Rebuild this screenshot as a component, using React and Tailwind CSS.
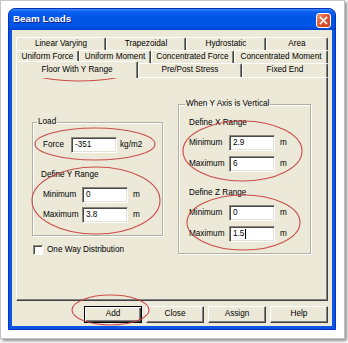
import React from "react";

const row1 = [
  ["Linear Varying", "w-[90px]"],
  ["Trapezoidal", "w-[80px]"],
  ["Hydrostatic", "w-[80px]"],
  ["Area", "w-[62px]"],
];
const row2 = [
  ["Uniform Force", "w-[63px]"],
  ["Uniform Moment", "w-[72px]"],
  ["Concentrated Force", "w-[83px]"],
  ["Concentrated Moment", "w-[94px]"],
];
const row3 = [
  ["Floor With Y Range", "w-[122px]", true],
  ["Pre/Post Stress", "w-[104px]"],
  ["Fixed End", "w-[86px]"],
];

function Tab({ label, w, sel }) {
  if (sel) {
    return (
      <div
        className={`${w} relative z-10 -mt-[2px] h-[17px] -mb-px flex items-center justify-center bg-[#ECE9D8] border-t border-l border-white border-r border-r-[#404040] rounded-t-[2px] shadow-[inset_-1px_0_0_#808080] pt-[1px]`}
      >
        {label}
      </div>
    );
  }
  return (
    <div
      className={`${w} h-full flex items-center justify-center bg-[#ECE9D8] border-t border-l border-white border-r border-r-[#404040] rounded-t-[2px] shadow-[inset_-1px_0_0_#808080]`}
    >
      {label}
    </div>
  );
}

function Input({ value, caret }) {
  return (
    <div className="w-[46px] h-[16px] bg-white border border-t-[#8a877c] border-l-[#8a877c] border-r-white border-b-white shadow-[inset_1px_1px_0_#4a4a46,inset_-1px_-1px_0_#e4e1d6] flex items-center pl-[3px] leading-none">
      <span>{value}</span>
      {caret && <span className="ml-px w-px h-[10px] bg-black" />}
    </div>
  );
}

function Row({ label, lw, value, unit, caret, um }) {
  return (
    <div className="flex items-center h-[16px] pl-[10px]">
      <div className={lw}>{label}</div>
      <Input value={value} caret={caret} />
      <div className={um}>{unit}</div>
    </div>
  );
}

function Button({ children, def }) {
  if (def) {
    return (
      <div className="w-[58px] h-[17px] flex items-center justify-center bg-[#ECE9D8] border border-black shadow-[inset_1px_1px_0_#fff,inset_-1px_-1px_0_#404040,inset_-2px_-2px_0_#808080]">
        {children}
      </div>
    );
  }
  return (
    <div className="w-[58px] h-[17px] flex items-center justify-center bg-[#ECE9D8] border border-t-white border-l-white border-r-[#404040] border-b-[#404040] shadow-[inset_-1px_-1px_0_#808080]">
      {children}
    </div>
  );
}

export default function App() {
  return (
    <div className="w-[348px] h-[343px] bg-white relative overflow-hidden font-['Liberation_Sans',Arial,sans-serif] text-black">
      <div className="w-[345px] h-[339px] border border-[#c4c4c4] bg-white shadow-[2px_2px_3px_rgba(0,0,0,0.45)] p-[7px]">
        <div className="w-[328px] h-[322px] flex flex-col rounded-t-[7px] border border-[#0a2fb8] bg-[#0b55e5]">
          <div className="h-[21px] flex items-center px-[4px] rounded-t-[6px] bg-[linear-gradient(180deg,#3c8cf7_0%,#0a5ef0_14%,#0054e3_45%,#0056e8_80%,#0042cc_100%)]">
            <span className="text-white font-bold text-[9.8px] [text-shadow:1px_1px_0_#0f1c8a]">
              Beam Loads
            </span>
            <div className="ml-auto mt-[2px] w-[15px] h-[15px] rounded-[3px] border border-white bg-[linear-gradient(135deg,#f09a78_0%,#e0562f_45%,#c8401c_100%)] flex items-center justify-center">
              <svg width="9" height="9" viewBox="0 0 9 9">
                <path d="M1.5 1.5 L7.5 7.5 M7.5 1.5 L1.5 7.5" stroke="#fff" strokeWidth="1.7" strokeLinecap="square" />
              </svg>
            </div>
          </div>
          <div className="flex-1 mx-[3px] mb-[3px] bg-[#ECE9D8] flex flex-col text-[8.2px]">
            <div className="mt-[7px] mx-[4px] flex flex-col">
              <div className="flex h-[13px]">
                {row1.map(([l, w]) => (
                  <Tab key={l} label={l} w={w} />
                ))}
              </div>
              <div className="flex h-[13px]">
                {row2.map(([l, w]) => (
                  <Tab key={l} label={l} w={w} />
                ))}
              </div>
              <div className="flex h-[14px] items-start">
                {row3.map(([l, w, s]) => (
                  <Tab key={l} label={l} w={w} sel={s} />
                ))}
              </div>
              <div className="h-[224px] flex items-start border-t border-l border-white border-r border-b border-r-[#404040] border-b-[#404040] shadow-[inset_-1px_-1px_0_#808080]">
                <div className="ml-[15px] mt-[39px] w-[131px] flex flex-col">
                  <fieldset className="border border-[#b3b0a3] shadow-[inset_1px_1px_0_#fff,1px_1px_0_#fff] pb-[12px]">
                    <legend className="ml-[4px] px-[1px] leading-[10px]">Load</legend>
                    <div className="mt-[10px]">
                      <Row label="Force" lw="w-[28px]" value="-351" unit="kg/m2" um="ml-[3px]" />
                    </div>
                    <div className="mt-[17px] pl-[8px] leading-[10px]">Define Y Range</div>
                    <div className="mt-[7px]">
                      <Row label="Minimum" lw="w-[39px]" value="0" unit="m" um="ml-[5px]" />
                    </div>
                    <div className="mt-[4px]">
                      <Row label="Maximum" lw="w-[39px]" value="3.8" unit="m" um="ml-[5px]" />
                    </div>
                  </fieldset>
                  <div className="mt-[9px] ml-px flex items-center gap-[4px] leading-[10px]">
                    <div className="w-[10px] h-[10px] bg-white border border-t-[#8a877c] border-l-[#8a877c] border-r-white border-b-white shadow-[inset_1px_1px_0_#4a4a46]" />
                    <span>One Way Distribution</span>
                  </div>
                </div>
                <div className="ml-[15px] mt-[21px] w-[133px]">
                  <fieldset className="border border-[#b3b0a3] shadow-[inset_1px_1px_0_#fff,1px_1px_0_#fff] pb-[11px]">
                    <legend className="ml-[6px] px-[1px] leading-[10px]">When Y Axis is Vertical</legend>
                    <div className="mt-[9px] pl-[10px] leading-[10px]">Define X Range</div>
                    <div className="mt-[7px]">
                      <Row label="Minimum" lw="w-[40px]" value="2.9" unit="m" um="ml-[5px]" />
                    </div>
                    <div className="mt-[5px]">
                      <Row label="Maximum" lw="w-[40px]" value="6" unit="m" um="ml-[5px]" />
                    </div>
                    <div className="mt-[16px] pl-[10px] leading-[10px]">Define Z Range</div>
                    <div className="mt-[7px]">
                      <Row label="Minimum" lw="w-[40px]" value="0" unit="m" um="ml-[5px]" />
                    </div>
                    <div className="mt-[5px]">
                      <Row label="Maximum" lw="w-[40px]" value="1.5" unit="m" um="ml-[5px]" caret />
                    </div>
                  </fieldset>
                </div>
              </div>
            </div>
            <div className="mt-[5px] pr-[4px] flex justify-end gap-[4px]">
              <Button def>Add</Button>
              <Button>Close</Button>
              <Button>Assign</Button>
              <Button>Help</Button>
            </div>
          </div>
        </div>
      </div>
      <svg className="absolute inset-0 pointer-events-none" width="348" height="343" viewBox="0 0 348 343">
        <g fill="none" stroke="#c93c3c" strokeWidth="1.1" opacity="0.9">
          <ellipse cx="79.5" cy="72.5" rx="46.5" ry="8.5" />
          <ellipse cx="95" cy="144" rx="60" ry="16" />
          <ellipse cx="96" cy="200.5" rx="64" ry="33.5" />
          <ellipse cx="242.5" cy="151" rx="59.5" ry="30" />
          <ellipse cx="243.5" cy="222.5" rx="56.5" ry="27.5" />
          <ellipse cx="110.5" cy="310" rx="38.5" ry="15" />
        </g>
      </svg>
    </div>
  );
}
